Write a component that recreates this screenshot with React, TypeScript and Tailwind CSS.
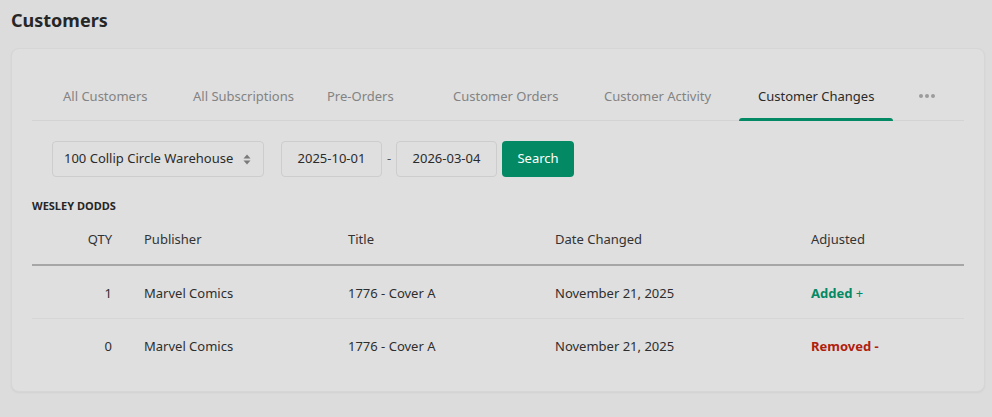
const tabs = [
  { label: 'All Customers', w: 'w-[130px]' },
  { label: 'All Subscriptions', w: 'w-[134px]' },
  { label: 'Pre-Orders', w: 'w-[126px]' },
  { label: 'Customer Orders', w: 'w-[151px]' },
  { label: 'Customer Activity', w: 'w-[154px]' },
  { label: 'Customer Changes', w: 'w-[154px]' },
];

const rows = [
  { qty: 1, publisher: 'Marvel Comics', title: '1776 - Cover A', date: 'November 21, 2025', added: true },
  { qty: 0, publisher: 'Marvel Comics', title: '1776 - Cover A', date: 'November 21, 2025', added: false },
];

const grid = 'grid grid-cols-[96px_204px_207px_256px_1fr]';

function SortArrows() {
  return (
    <svg width="8" height="11" viewBox="0 0 8 11" className="fill-[#7a7a7a]">
      <path d="M4 0.5 L7.5 4.5 H0.5 Z" />
      <path d="M4 10.5 L7.5 6.5 H0.5 Z" />
    </svg>
  );
}

export default function App() {
  return (
    <div
      className="min-h-[417px] bg-[#dcdcdc] px-[11px] pt-[8px] pb-[27px] pr-[7px] text-[#2e2e2e]"
      style={{ fontFamily: '"Noto Sans", "Open Sans", sans-serif' }}
    >
      <h1 className="text-[18px] font-bold leading-[24px] text-[#262626]">Customers</h1>

      <div className="mt-[16px] rounded-lg border border-[#d6d6d6] bg-[#dfdfdf] px-5 pt-6 pb-[19px] shadow-[0_1px_2px_rgba(0,0,0,0.05)]">
        {/* Tabs */}
        <div className="flex h-[48px] items-stretch border-b border-[#d3d3d3] pl-3">
          {tabs.map((t) => {
            const active = t.label === 'Customer Changes';
            return (
              <div
                key={t.label}
                className={
                  'relative flex items-center whitespace-nowrap pl-[19px] text-[13px] ' +
                  t.w +
                  ' ' +
                  (active ? 'text-[#2a2a2a]' : 'text-[#838383]')
                }
              >
                {t.label}
                {active && (
                  <span className="absolute bottom-[-1px] left-0 right-0 h-[3px] rounded-t-sm bg-[#038a65]" />
                )}
              </div>
            );
          })}
          <div className="ml-[26px] flex items-center gap-[2px] pb-[1px]">
            <span className="h-[4px] w-[4px] rounded-full bg-[#9c9c9c]" />
            <span className="h-[4px] w-[4px] rounded-full bg-[#9c9c9c]" />
            <span className="h-[4px] w-[4px] rounded-full bg-[#9c9c9c]" />
          </div>
        </div>

        {/* Filters */}
        <div className="mt-5 flex items-center whitespace-nowrap pl-5 text-[13px]">
          <div className="flex h-9 w-[212px] items-center justify-between rounded border border-[#cdcdcd] pl-[11px] pr-[12px] text-[#2b2b2b]">
            <span>100 Collip Circle Warehouse</span>
            <SortArrows />
          </div>
          <div className="ml-[17px] flex h-9 w-[101px] items-center justify-center rounded border border-[#cdcdcd] text-[#2b2b2b]">
            2025-10-01
          </div>
          <span className="w-[14px] text-center text-[#555]">-</span>
          <div className="flex h-9 w-[101px] items-center justify-center rounded border border-[#cdcdcd] text-[#2b2b2b]">
            2026-03-04
          </div>
          <button className="ml-[5px] h-9 w-[72px] rounded bg-[#038a65] text-[13px] text-white">Search</button>
        </div>

        <div className="mt-[21px] text-[11px] font-bold leading-[16px] text-[#262626]">WESLEY DODDS</div>

        {/* Table */}
        <div className="mt-[2px] whitespace-nowrap text-[13px]">
          <div className={grid + ' h-[50px] items-center border-b-2 border-[#a6a6a6] text-[#333]'}>
            <div className="pr-4 text-right">QTY</div>
            <div className="pl-4">Publisher</div>
            <div className="pl-4">Title</div>
            <div className="pl-4">Date Changed</div>
            <div className="pl-4">Adjusted</div>
          </div>
          {rows.map((r, i) => (
            <div
              key={i}
              className={
                grid + ' h-[53px] items-center pt-[3px] text-[#2e2e2e] ' + (i === 0 ? 'border-b border-[#d6d6d6]' : '')
              }
            >
              <div className="pr-4 text-right">{r.qty}</div>
              <div className="pl-4">{r.publisher}</div>
              <div className="pl-4">{r.title}</div>
              <div className="pl-4">{r.date}</div>
              <div className="pl-4">
                {r.added ? (
                  <span className="text-[#038a65]">
                    <span className="font-bold">Added</span> +
                  </span>
                ) : (
                  <span className="font-bold text-[#b0200c]">Removed -</span>
                )}
              </div>
            </div>
          ))}
        </div>
      </div>
    </div>
  );
}
